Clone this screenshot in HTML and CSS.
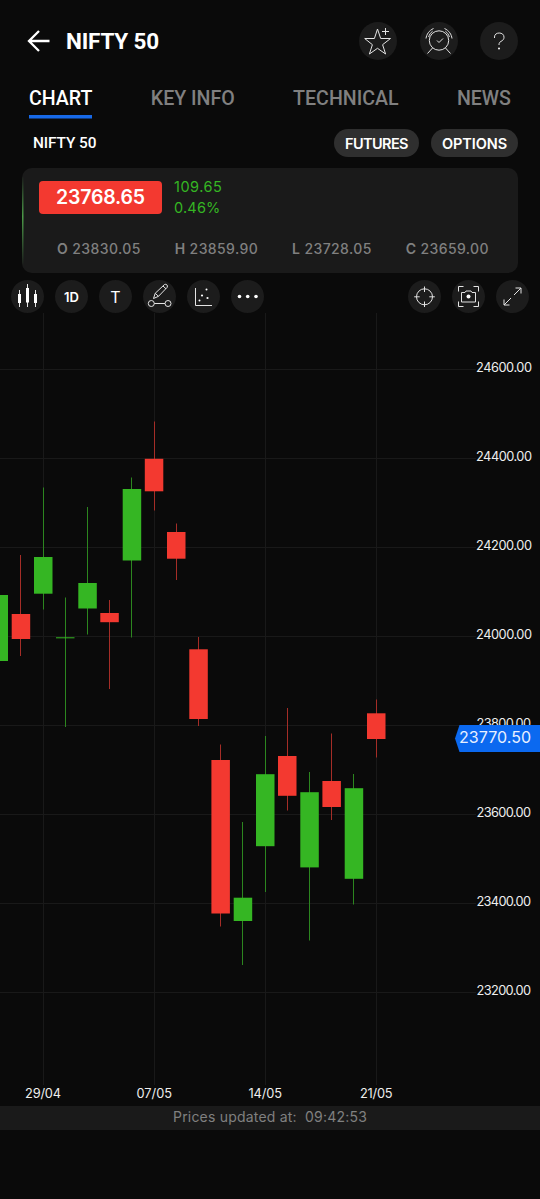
FILE: index.html
```
<!DOCTYPE html>
<html lang="en">
<head>
    <meta charset="utf-8">
    <meta name="viewport" content="width=device-width, initial-scale=1">
    <title>NIFTY 50</title>
    <link rel="stylesheet" href="styles.css">
</head>
<body>
    <header class="header">
        <svg class="back" width="24" height="24" viewBox="0 0 24 24"><path d="M12 2 2 12l10 10M2 12h20.500"/></svg>
        <h1>NIFTY 50</h1>
        <div class="actions">
            <button class="circle" aria-label="Add to watchlist">
                <svg width="38" height="38" viewBox="0 0 38 38"><path d="m18.500 7 3.200 9.500h9.800l-7.900 6.200 3 9.300-8.100-5.700-8.100 5.700 3-9.300L5.700 16.500h9.700zM26.500 6v7M23 9.500h7"/></svg>
            </button>
            <button class="circle" aria-label="Set alert">
                <svg width="38" height="38" viewBox="0 0 38 38"><circle cx="19" cy="18.500" r="9.700"/><path d="m17 18.500 2 2 4-4M12.500 26 7.500 31.500M25.500 26l5 5.500M6 16.500c.5-4 3-8 7.500-10M32 16.500c-.5-4-3-8-7.500-10M8.600 15c.7-2.400 2-4.300 4-5.800M29.400 15c-.7-2.400-2-4.300-4-5.800"/></svg>
            </button>
            <button class="circle" aria-label="Help">
                <svg width="38" height="38" viewBox="0 0 38 38"><path d="M14.500 16v-1c0-2.500 2-4 4.700-4s4.800 1.500 4.800 4.200c0 2.200-1.200 3.200-3 4.200-1.500.8-2 1.600-2 3.600"/><circle class="fill" cx="19" cy="26.500" r="1"/></svg>
            </button>
        </div>
    </header>

    <nav class="tabs">
        <a class="tab active">CHART</a>
        <a class="tab">KEY INFO</a>
        <a class="tab">TECHNICAL</a>
        <a class="tab">NEWS</a>
    </nav>

    <div class="subhead">
        <span class="symbol">NIFTY 50</span>
        <button class="pill futures">FUTURES</button>
        <button class="pill options">OPTIONS</button>
    </div>

    <section class="quote">
        <div class="quote-top">
            <span class="ltp">23768.65</span>
            <div class="change">
                <span>109.65</span>
                <span>0.46%</span>
            </div>
        </div>
        <div class="ohlc">
            <span><b>O</b> 23830.05</span>
            <span><b>H</b> 23859.90</span>
            <span><b>L</b> 23728.05</span>
            <span><b>C</b> 23659.00</span>
        </div>
    </section>

    <div class="toolbar">
        <button class="tool" aria-label="Chart type">
            <svg width="33" height="33" viewBox="0 0 33 33"><path d="M8.500 10v17M16.500 4v23M24.500 10v17"/><path class="fill" d="M7 14h3v9H7zM15 8h3v14.500h-3zM23 14h3v9h-3z"/></svg>
        </button>
        <button class="tool interval">1D</button>
        <button class="tool text">T</button>
        <button class="tool" aria-label="Draw">
            <svg width="33" height="33" viewBox="0 0 33 33"><circle cx="8.300" cy="23.500" r="3"/><circle cx="25" cy="23.500" r="3"/><path d="M11.300 23.500H22M10.500 18.500l1.700-5.200 9.300-8.800c1.700-.9 3.700.9 2.700 2.800l-8.700 9zM12.200 13.300l3.300 3M20 6l3 2.800"/></svg>
        </button>
        <button class="tool" aria-label="Indicators">
            <svg width="33" height="33" viewBox="0 0 33 33"><path d="M8.500 8v17.500H25"/><g class="fill"><circle cx="19.500" cy="9.500" r="1"/><circle cx="15" cy="15.500" r="1.100"/><circle cx="20.500" cy="18" r="1.100"/><circle cx="12.500" cy="20.500" r="1"/></g></svg>
        </button>
        <button class="tool" aria-label="More">
            <svg width="33" height="33" viewBox="0 0 33 33"><g class="fill"><circle cx="8.500" cy="16.500" r="1.800"/><circle cx="16.700" cy="16.500" r="1.800"/><circle cx="25" cy="16.500" r="1.800"/></g></svg>
        </button>
        <button class="tool crosshair" aria-label="Crosshair">
            <svg width="33" height="33" viewBox="0 0 33 33"><circle cx="16.500" cy="16.800" r="8"/><path d="M16.500 6.500V12M16.500 21.500V27M6.200 16.800h5.500M21.300 16.800h5.500"/></svg>
        </button>
        <button class="tool" aria-label="Snapshot">
            <svg width="33" height="33" viewBox="0 0 33 33"><path d="M6.500 11.500v-5h5M21.500 6.500h5v5M26.500 21.500v5h-5M11.500 26.500h-5v-5M9.500 12.500h3.500l1-1.500h5l1 1.500h3.500v9.500h-14z"/><circle class="fill" cx="16.500" cy="16.500" r="2"/></svg>
        </button>
        <button class="tool" aria-label="Full screen">
            <svg width="33" height="33" viewBox="0 0 33 33"><path d="m18 15 7-7M19.500 8H25v5.500M15 18l-7 7M8 19.500V25h5.500"/></svg>
        </button>
    </div>

    <!-- viewBox starts where the toolbar ends -->
    <svg class="chart" width="540" height="793" viewBox="0 313 540 793">
        <path class="grid" d="M0 369.500h476M0 458.500h476M0 547.500h476M0 636.500h476M0 725.500h476M0 814.500h476M0 903.500h476M0 992.500h476M43.500 313v772M154.500 313v772M265.500 313v772M376.500 313v772"/>

        <g class="up">
            <path d="M43.500 487.500v122M65.500 597.500v129.500M87.500 507v127.500M131.500 477.500v160M242.500 822v143M265.500 736v156M309.500 772v168.500M353.500 774v130.500"/>
            <rect x="-10" y="595" width="18" height="66"/>
            <rect x="34" y="557" width="18.500" height="36.700"/>
            <rect x="56" y="637.300" width="18.500" height="1"/>
            <rect x="78.300" y="583" width="18.500" height="25.500"/>
            <rect x="122.700" y="489" width="18.500" height="71.500"/>
            <rect x="233.700" y="897.700" width="18.500" height="23.300"/>
            <rect x="256" y="774.200" width="18.500" height="72"/>
            <rect x="300.300" y="792.200" width="18.500" height="75.200"/>
            <rect x="344.700" y="788.200" width="18.500" height="90.600"/>
        </g>
        <g class="down">
            <path d="M20.500 555v101M109.500 600v89M154.500 421.500v89M176.500 523.500v56.500M198.500 637v89M220.500 744.500v182M287.500 708v102.500M331.500 733.500v86.500M376.500 699.500v58"/>
            <rect x="11.700" y="614" width="18.500" height="25"/>
            <rect x="100.300" y="613" width="18.500" height="9.200"/>
            <rect x="144.800" y="458.800" width="18.500" height="32.500"/>
            <rect x="167" y="532" width="18.500" height="26.700"/>
            <rect x="189.300" y="649.300" width="18.500" height="69.700"/>
            <rect x="211.400" y="760" width="18.500" height="153.500"/>
            <rect x="278" y="756" width="18.500" height="39.800"/>
            <rect x="322.400" y="781" width="18.500" height="26"/>
            <rect x="367" y="713.300" width="18.500" height="25.700"/>
        </g>

        <g class="axis">
            <text x="476" y="372" textLength="56">24600.00</text>
            <text x="476" y="461" textLength="56">24400.00</text>
            <text x="476" y="550" textLength="56">24200.00</text>
            <text x="476" y="639" textLength="56">24000.00</text>
            <text x="476.500" y="728" textLength="54.500">23800.00</text>
            <text x="476.500" y="817" textLength="54.500">23600.00</text>
            <text x="476.500" y="906" textLength="54.500">23400.00</text>
            <text x="476.500" y="995" textLength="54.500">23200.00</text>
            <text x="25" y="1098" textLength="36">29/04</text>
            <text x="136.500" y="1098" textLength="35.500">07/05</text>
            <text x="248.500" y="1098" textLength="33.500">14/05</text>
            <text x="360" y="1098" textLength="32.500">21/05</text>
        </g>

        <path class="tag" d="M455 738.500 459.500 725H540v27h-80.500z"/>
        <text class="tag-text" x="459" y="742.700" textLength="72">23770.50</text>
    </svg>

    <footer class="updated">Prices updated at:&nbsp; 09:42:53</footer>
</body>
</html>
```

FILE: styles.css
```
html, body, button {
    font-family: Inter, "Noto Sans", sans-serif;
}
html, body {
    margin: 0;
    padding: 0;
    background-color: #0a0a0a;
    color: #fff;
}
body {
    width: 540px;
    min-height: 1199px;
}
button {
    border: none;
    padding: 0;
    color: #fff;
}
svg {
    display: block;
    fill: none;
    stroke: #e4e4e4;
    stroke-width: 1;
}
.fill {
    fill: #fff;
    stroke: none;
}

/* header */
.header {
    display: flex;
    align-items: center;
    height: 82px;
    padding: 0 22px 0 27px;
}
.back {
    stroke: #fff;
    stroke-width: 2.3;
}
.header h1 {
    margin: 0 0 0 15px;
    font-family: Roboto, sans-serif;
    font-size: 22.5px;
    font-weight: 700;
    letter-spacing: -0.2px;
}
.actions {
    display: flex;
    gap: 22.3px;
    margin-left: auto;
}
.circle {
    width: 38px;
    height: 38px;
    border-radius: 50%;
    background-color: #1c1c1c;
}

/* tabs */
.tabs {
    display: flex;
    justify-content: space-between;
    height: 37px;
    padding: 0 29px;
    font-family: Roboto, sans-serif;
    font-size: 19.6px;
    font-weight: 500;
    line-height: 34px;
    color: #808080;
}
.tab {
    box-sizing: border-box;
    height: 37px;
}
.active {
    color: #fff;
    background: linear-gradient(#1769e8, #1769e8) 0 33px / 100% 3.5px no-repeat;
}

/* symbol row */
.subhead {
    display: flex;
    align-items: center;
    height: 28px;
    padding: 10px 22px 11px 33px;
}
.symbol {
    flex: 1;
    font-family: Roboto, sans-serif;
    font-size: 15.4px;
    font-weight: 500;
    letter-spacing: -0.1px;
}
.pill {
    height: 28px;
    border-radius: 14px;
    background-color: #2f2f2f;
    font-size: 14.5px;
    font-weight: 600;
}
.futures {
    width: 85px;
    margin-right: 12px;
    letter-spacing: -0.6px;
}
.options {
    width: 87px;
    letter-spacing: -0.1px;
}

/* quote card */
.quote {
    box-sizing: border-box;
    height: 105px;
    margin: 0 22px;
    padding: 9px 16px 0 17px;
    border-radius: 10px;
    background: linear-gradient(transparent, #4c9a48 45%, transparent) 0 8px / 1.5px 90px no-repeat, #1a1a1a;
}
.quote-top {
    display: flex;
    align-items: center;
}
.ltp {
    width: 123px;
    height: 33px;
    border-radius: 4px;
    background-color: #f33930;
    font-size: 19.5px;
    font-weight: 600;
    line-height: 33px;
    letter-spacing: -0.2px;
    text-align: center;
}
.change {
    display: flex;
    flex-direction: column;
    margin-left: 12px;
    font-size: 14.5px;
    line-height: 20.5px;
    letter-spacing: 0.2px;
    color: #35b623;
}
.change span:first-child {
    letter-spacing: 0.5px;
}
.ohlc {
    display: flex;
    justify-content: space-between;
    padding: 20px 13px 0 18px;
    font-size: 14px;
    font-weight: 500;
    line-height: 22px;
    letter-spacing: 0.4px;
    color: #808080;
}
.ohlc b {
    font-weight: 600;
}

/* chart tools */
.toolbar {
    display: flex;
    gap: 11px;
    height: 33px;
    padding: 7px 11px 0;
}
.tool {
    width: 33px;
    height: 33px;
    border-radius: 50%;
    background-color: #1c1c1c;
}
.interval {
    font-size: 13px;
    font-weight: 600;
}
.text {
    font-size: 16px;
    font-weight: 400;
}
.crosshair {
    margin-left: auto;
}

/* chart */
.grid {
    stroke: #191919;
}
.up {
    fill: #35b623;
}
.down {
    fill: #f33930;
}
.up path {
    stroke: #2c861f;
}
.down path {
    stroke: #a52d27;
}
.up rect, .down rect {
    stroke: none;
}
.axis {
    fill: #eee;
    stroke: none;
    font-size: 12.8px;
}
.tag {
    fill: #0b69f0;
    stroke: none;
}
.tag-text {
    fill: #e8f0ff;
    stroke: none;
    font-size: 16px;
}

.updated {
    height: 24px;
    background-color: #1a1a1a;
    color: #808080;
    font-size: 14px;
    line-height: 22px;
    letter-spacing: 0.2px;
    text-align: center;
}
```
